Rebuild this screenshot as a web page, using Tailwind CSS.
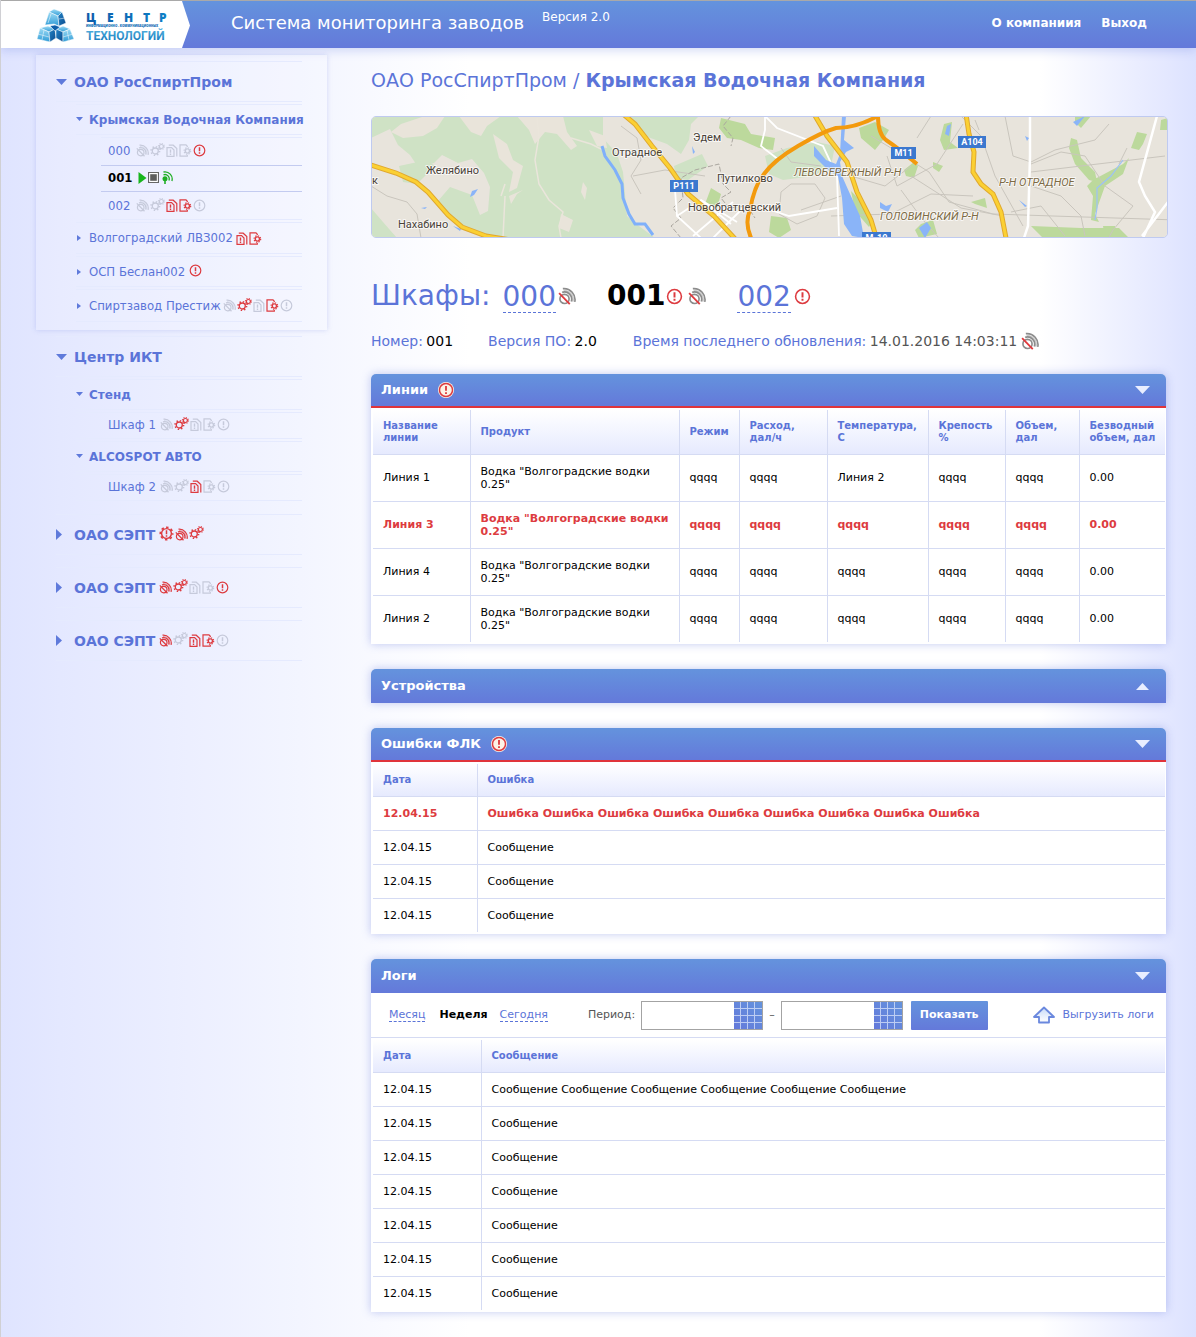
<!DOCTYPE html>
<html lang="ru">
<head>
<meta charset="utf-8">
<meta name="viewport" content="width=device-width, initial-scale=1">
<title>Система мониторинга заводов</title>
<script src="https://cdn.jsdelivr.net/npm/@tailwindcss/browser@4"></script>
</head>
<body class="font-['DejaVu_Sans',Verdana,sans-serif] text-[11px] text-black bg-[linear-gradient(90deg,#dfe4ff_0px,#e4e8ff_60px,#f3f5ff_300px,#ffffff_470px,#ffffff_1040px,#e3e7ff_1170px,#dce2ff_1196px)] border-l border-[#d0d0d4]">

<!-- Icon set -->
<svg class="absolute size-0" aria-hidden="true">
  <defs>
    <linearGradient id="cube-a" x1="0" y1="0" x2="0" y2="1"><stop offset="0" stop-color="#9fdcf5"/><stop offset="1" stop-color="#2f9bd6"/></linearGradient>
    <linearGradient id="cube-b" x1="0" y1="0" x2="1" y2="1"><stop offset="0" stop-color="#2385c8"/><stop offset="1" stop-color="#0b4a8c"/></linearGradient>
    <linearGradient id="word-a" x1="0" y1="0" x2="1" y2="0"><stop offset="0" stop-color="#0d5cab"/><stop offset="1" stop-color="#0d7fc6"/></linearGradient>
    <linearGradient id="word-b" x1="0" y1="0" x2="0" y2="1"><stop offset="0" stop-color="#59b6e2"/><stop offset="1" stop-color="#0e72b8"/></linearGradient>
    <linearGradient id="up-fill" x1="0" y1="0" x2="0" y2="1"><stop offset="0" stop-color="#c9dcf8"/><stop offset="1" stop-color="#ffffff"/></linearGradient>
  </defs>
  <symbol id="i-warn" viewBox="0 0 13 13"><circle cx="6.5" cy="6.5" r="5.3" fill="none" stroke="currentColor" stroke-width="1.2"/><path d="M6.5 3.3v3.9M6.5 8.300v1.500" stroke="currentColor" stroke-width="1.500"/></symbol>
  <symbol id="i-sat" viewBox="0 0 13 13"><g fill="none" stroke="currentColor" stroke-width="1.2"><circle cx="4.7" cy="8.6" r="3.3"/><path d="M3 3.9a5.2 5.2 0 0 1 6.6 6.6M3.500 1.200a8 8 0 0 1 8.600 9.600"/><path d="M4 2.600a6.500 6.500 0 0 1 6.700 8" opacity=".45"/></g><path d="M.8 4.400l7.700 7.900" stroke="var(--slash,currentColor)" stroke-width="1.300"/></symbol>
  <symbol id="i-gears" viewBox="0 0 15 13"><g fill="none" stroke="currentColor"><circle cx="5.3" cy="8" r="3" stroke-width="1.3"/><circle cx="5.3" cy="8" r="4.300" stroke-width="1.500" stroke-dasharray="1.400 1.977"/><circle cx="11.400" cy="3.500" r="2" stroke-width="1.200"/><circle cx="11.400" cy="3.500" r="3" stroke-width="1.100" stroke-dasharray="1.100 1.256"/></g></symbol>
  <symbol id="i-doc" viewBox="0 0 12 13"><g fill="none" stroke="currentColor" stroke-width="1.200"><path d="M1 3.600h4.600L8 6v6.400H1zM2.800 1.200h4.400l3.600 3.400v7.800"/><path d="M4.500 5.500v3.200M4.500 9.600v1.300" stroke-width="1.400"/></g></symbol>
  <symbol id="i-docgear" viewBox="0 0 13 13"><g fill="none" stroke="currentColor"><path d="M8.300 3V2.300L7 .9H1v11.300h7.300V11" stroke-width="1.200"/><circle cx="8.400" cy="7" r="2.100" stroke-width="1.400"/><circle cx="8.400" cy="7" r="3.300" stroke-width="1.200" stroke-dasharray="1.300 1.292"/></g></symbol>
  <symbol id="i-gearwarn" viewBox="0 0 15 15"><g fill="none" stroke="currentColor"><circle cx="7.500" cy="7.500" r="4.900" stroke-width="1.400"/><circle cx="7.500" cy="7.500" r="6.200" stroke-width="1.600" stroke-dasharray="2.500 2.370" stroke-dashoffset="1.200"/><path d="M7.500 4.300v4M7.500 9.300v1.500" stroke-width="1.500"/></g></symbol>
  <symbol id="i-ant" viewBox="0 0 12 13"><circle cx="4" cy="7.800" r="2.500" fill="currentColor"/><path d="M4 8v5" stroke="currentColor" stroke-width="1.600"/><path d="M2.500 3.800a4.300 4.300 0 0 1 5.400 5.700M2.500 1a7.200 7.200 0 0 1 8.400 9" fill="none" stroke="currentColor" stroke-width="1.300"/></symbol>
  <symbol id="i-calendar" viewBox="0 0 28 27"><path d="M6.500 0v27M13.500 0v27M20.500 0v27M0 6.500h28M0 13.500h28M0 20.500h28" stroke="#dbe5fb" stroke-width="1" opacity=".75"/></symbol>
</svg>

<header class="h-12 flex border-t border-[#a9a9a9] -ml-px bg-linear-to-b from-[#6493dd] to-[#6479da] shadow-[0_2px_10px_#6479da4d]">
  <a href="#" aria-label="Центр информационно-коммуникационных технологий" class="block w-[190px] shrink-0">
    <svg class="block w-[190px] h-[47px]" viewBox="0 1 190 47">
      <path d="M0 1h182l8 24.500L182 48H0z" fill="#fff"/>
      <g stroke="#fff" stroke-width=".5" stroke-linejoin="round">
        <path d="M49 12l5-3 8 3-4 4z" fill="url(#cube-a)"/><path d="M49 12l9 4 1 10-5-2-9 1z" fill="url(#cube-a)"/><path d="M58 16l4-4 4 11-7 3z" fill="url(#cube-b)"/><path d="M51 14l-3 9M59 19l6-1" />
        <path d="M40 28l8-2 7 3-6 3z" fill="url(#cube-a)"/><path d="M40 28l9 4 1 10-13-3z" fill="url(#cube-a)"/><path d="M49 32l6-3 1 9-6 4z" fill="url(#cube-b)"/><path d="M44 30l-2 10M38 34l11 3"/>
        <path d="M56 29l7-3 7 3-7 3z" fill="url(#cube-a)"/><path d="M56 29l7 3v10l-7-4z" fill="url(#cube-b)"/><path d="M63 32l7-3 4 10-11 3z" fill="url(#cube-a)"/><path d="M67 30l2 10M63 37l10-3"/>
        <path d="M50 26l5-1 5 2-5 4z" fill="#0e5fa8"/>
      </g>
      <g font-family="'Open Sans',sans-serif" font-weight="800">
        <text x="86 107 124 143 159" y="22" font-size="12" fill="url(#word-a)">ЦЕНТР</text>
        <text x="86" y="27" font-size="3" fill="#0f6db5">ИНФОРМАЦИОННО - КОММУНИКАЦИОННЫХ</text>
      </g>
      <text x="86" y="40" font-family="Roboto,sans-serif" font-weight="700" font-size="12" fill="url(#word-b)">ТЕХНОЛОГИЙ</text>
    </svg>
  </a>
  <div class="flex items-center pl-[41px] gap-[18px] text-white">
    <h1 class="text-[18px] leading-6 -mt-1">Система мониторинга заводов</h1>
    <span class="text-xs self-start pt-2">Версия 2.0</span>
  </div>
  <nav class="ml-auto pr-[49px] pb-1 flex items-center gap-5 text-white text-xs font-bold">
    <a href="#">О компаниия</a><a href="#">Выход</a>
  </nav>
</header>

<div class="flex -ml-px">
<aside class="w-[371px] shrink-0 pl-9 pr-11 pt-[7px]">
  <nav aria-label="Заводы" class="text-[#5b74d8]">
    <section class="bg-white/15 shadow-[0_0_5px_#6479da40] pl-5 pr-[25px] pt-1.5 pb-2">
      <button type="button" class="w-full h-[41px] border-y border-[#e5eafe] flex items-center text-sm font-bold text-left"><svg class="w-[11px] h-1.5 mr-[7px]" viewBox="0 0 11 6"><path d="M0 0h11L5.500 6z" fill="#5f7adb"/></svg>ОАО РосСпиртПром</button>
      <div class="pl-5 flex flex-col gap-0.5 pt-0.5">
        <button type="button" class="h-[31px] border-y border-[#e5eafe] flex items-center text-xs font-bold text-left whitespace-nowrap"><svg class="w-[7px] h-1 mr-1.5 -mt-0.5 shrink-0" viewBox="0 0 7 4"><path d="M0 0h7L3.500 4z" fill="#5f7adb"/></svg>Крымская Водочная Компания</button>
        <ul class="pl-[25px] font-['DejaVu_Sans_Condensed',Tahoma,sans-serif] text-[13px]">
          <li class="h-7 pb-0.5 border-t border-[#e5eafe] pl-[7px] flex items-center gap-px text-[#c6cadb]"><a href="#" class="text-[#5b74d8] mr-[5px]">000</a>
            <svg class="size-[13px]"><use href="#i-sat"/></svg><svg class="w-[15px] h-[13px] -mt-0.5"><use href="#i-gears"/></svg><svg class="w-3 h-[13px]"><use href="#i-doc"/></svg><svg class="size-[13px]"><use href="#i-docgear"/></svg><svg class="size-[13px] text-[#dd3b40]"><use href="#i-warn"/></svg></li>
          <li class="h-[27px] pb-0.5 border-y border-[#c3cbf0] pl-[7px] flex items-center gap-px font-bold"><a href="#" class="text-black mr-[5px]">001</a>
            <svg class="w-[9px] h-3" viewBox="0 0 8 12"><path d="M0 0l8 6-8 6z" fill="#17b51c"/></svg><svg class="size-[11px] mr-px" viewBox="0 0 10 10"><path d="M.5.5h9v9h-9z" fill="#fff" stroke="#666"/><path d="M2 2h6v6H2z" fill="#5d5d5d"/></svg><svg class="w-3 h-[13px] text-[#1fae24]"><use href="#i-ant"/></svg></li>
          <li class="h-7 border-b border-[#e5eafe] pl-[7px] flex items-center gap-px text-[#c6cadb]"><a href="#" class="text-[#5b74d8] mr-[5px]">002</a>
            <svg class="size-[13px]"><use href="#i-sat"/></svg><svg class="w-[15px] h-[13px] -mt-0.5"><use href="#i-gears"/></svg><svg class="w-3 h-[13px] text-[#dd3b40]"><use href="#i-doc"/></svg><svg class="size-[13px] text-[#dd3b40]"><use href="#i-docgear"/></svg><svg class="size-[13px]"><use href="#i-warn"/></svg></li>
        </ul>
        <div class="h-8 border-y border-[#e5eafe] flex items-center gap-px text-[#c6cadb] font-['DejaVu_Sans_Condensed',Tahoma,sans-serif] text-[13px]"><button type="button" class="flex items-center text-[#5b74d8] mr-0.5 pl-px"><svg class="w-1 h-1.5 mr-2" viewBox="0 0 4 6"><path d="M0 0l4 3-4 3z" fill="#5f7adb"/></svg>Волгоградский ЛВЗ002</button>
          <svg class="w-3 h-[13px] text-[#dd3b40]"><use href="#i-doc"/></svg><svg class="size-[13px] text-[#dd3b40]"><use href="#i-docgear"/></svg></div>
        <div class="h-[31px] border-y border-[#e5eafe] flex items-center gap-px text-[#c6cadb] font-['DejaVu_Sans_Condensed',Tahoma,sans-serif] text-[13px]"><button type="button" class="flex items-center text-[#5b74d8] mr-[3px] pl-px"><svg class="w-1 h-1.5 mr-2" viewBox="0 0 4 6"><path d="M0 0l4 3-4 3z" fill="#5f7adb"/></svg>ОСП Беслан002</button>
          <svg class="size-[13px] -mt-0.5 text-[#dd3b40]"><use href="#i-warn"/></svg></div>
        <div class="h-[33px] border-y border-[#e5eafe] flex items-center gap-px text-[#c6cadb] font-['DejaVu_Sans_Condensed',Tahoma,sans-serif] text-[13px]"><button type="button" class="flex items-center text-[#5b74d8] mr-px pl-px"><svg class="w-1 h-1.5 mr-2" viewBox="0 0 4 6"><path d="M0 0l4 3-4 3z" fill="#5f7adb"/></svg>Спиртзавод Престиж</button>
          <svg class="size-[13px]"><use href="#i-sat"/></svg><svg class="w-[15px] h-[13px] -mt-0.5 text-[#dd3b40]"><use href="#i-gears"/></svg><svg class="w-3 h-[13px]"><use href="#i-doc"/></svg><svg class="size-[13px] text-[#dd3b40]"><use href="#i-docgear"/></svg><svg class="size-[13px]"><use href="#i-warn"/></svg></div>
      </div>
    </section>

    <section class="pl-5 pr-[25px] pt-1.5">
      <button type="button" class="w-full h-[41px] border-y border-[#e5eafe] flex items-center text-sm font-bold text-left"><svg class="w-[11px] h-1.5 mr-[7px]" viewBox="0 0 11 6"><path d="M0 0h11L5.500 6z" fill="#5f7adb"/></svg>Центр ИКТ</button>
      <div class="pl-5 flex flex-col gap-0.5 pt-0.5">
        <button type="button" class="h-[31px] border-y border-[#e5eafe] flex items-center text-xs font-bold text-left"><svg class="w-[7px] h-1 mr-1.5 -mt-0.5 shrink-0" viewBox="0 0 7 4"><path d="M0 0h7L3.500 4z" fill="#5f7adb"/></svg>Стенд</button>
        <div class="h-[27px] border-y border-[#e5eafe] pl-8 pb-0.5 flex items-center gap-px text-[#c6cadb] font-['DejaVu_Sans_Condensed',Tahoma,sans-serif] text-[13px]"><a href="#" class="text-[#5b74d8] mr-[3px]">Шкаф 1</a>
          <svg class="size-[13px]"><use href="#i-sat"/></svg><svg class="w-[15px] h-[13px] -mt-0.5 text-[#dd3b40]"><use href="#i-gears"/></svg><svg class="w-3 h-[13px]"><use href="#i-doc"/></svg><svg class="size-[13px]"><use href="#i-docgear"/></svg><svg class="size-[13px]"><use href="#i-warn"/></svg></div>
        <button type="button" class="h-[31px] border-y border-[#e5eafe] flex items-center text-xs font-bold text-left"><svg class="w-[7px] h-1 mr-1.5 -mt-0.5 shrink-0" viewBox="0 0 7 4"><path d="M0 0h7L3.500 4z" fill="#5f7adb"/></svg>ALCOSPOT АВТО</button>
        <div class="h-[27px] border-y border-[#e5eafe] pl-8 pb-0.5 flex items-center gap-px text-[#c6cadb] font-['DejaVu_Sans_Condensed',Tahoma,sans-serif] text-[13px]"><a href="#" class="text-[#5b74d8] mr-[3px]">Шкаф 2</a>
          <svg class="size-[13px]"><use href="#i-sat"/></svg><svg class="w-[15px] h-[13px] -mt-0.5"><use href="#i-gears"/></svg><svg class="w-3 h-[13px] text-[#dd3b40]"><use href="#i-doc"/></svg><svg class="size-[13px]"><use href="#i-docgear"/></svg><svg class="size-[13px]"><use href="#i-warn"/></svg></div>
      </div>
    </section>

    <section class="pl-5 pr-[25px] pt-[13px] flex flex-col gap-3">
      <div class="h-[41px] border-y border-[#e5eafe] flex items-center gap-px text-[#dd3b40]"><button type="button" class="flex items-center text-sm font-bold text-[#5b74d8] mr-[3px]"><svg class="w-1.5 h-[11px] mr-3" viewBox="0 0 6 11"><path d="M0 0l6 5.500L0 11z" fill="#5f7adb"/></svg>ОАО СЭПТ</button>
        <svg class="size-[15px] -mt-0.5"><use href="#i-gearwarn"/></svg><svg class="size-[13px]"><use href="#i-sat"/></svg><svg class="w-[15px] h-[13px] -mt-1"><use href="#i-gears"/></svg></div>
      <div class="h-[41px] border-y border-[#e5eafe] flex items-center gap-px text-[#c6cadb]"><button type="button" class="flex items-center text-sm font-bold text-[#5b74d8] mr-[3px]"><svg class="w-1.5 h-[11px] mr-3" viewBox="0 0 6 11"><path d="M0 0l6 5.500L0 11z" fill="#5f7adb"/></svg>ОАО СЭПТ</button>
        <svg class="size-[13px] text-[#dd3b40]"><use href="#i-sat"/></svg><svg class="w-[15px] h-[13px] -mt-1 text-[#dd3b40]"><use href="#i-gears"/></svg><svg class="w-3 h-[13px]"><use href="#i-doc"/></svg><svg class="size-[13px]"><use href="#i-docgear"/></svg><svg class="size-[13px] text-[#dd3b40]"><use href="#i-warn"/></svg></div>
      <div class="h-[41px] border-y border-[#e5eafe] flex items-center gap-px text-[#c6cadb]"><button type="button" class="flex items-center text-sm font-bold text-[#5b74d8] mr-[3px]"><svg class="w-1.5 h-[11px] mr-3" viewBox="0 0 6 11"><path d="M0 0l6 5.500L0 11z" fill="#5f7adb"/></svg>ОАО СЭПТ</button>
        <svg class="size-[13px] text-[#dd3b40]"><use href="#i-sat"/></svg><svg class="w-[15px] h-[13px] -mt-1"><use href="#i-gears"/></svg><svg class="w-3 h-[13px] text-[#dd3b40]"><use href="#i-doc"/></svg><svg class="size-[13px] text-[#dd3b40]"><use href="#i-docgear"/></svg><svg class="size-[13px]"><use href="#i-warn"/></svg></div>
    </section>
  </nav>
</aside>

<main class="grow min-w-0 pr-[30px] pb-[25px] pt-5">
  <h2 class="text-[19px] leading-6 text-[#5b74d8] whitespace-nowrap"><a href="#">ОАО РосСпиртПром</a> / <b>Крымская Водочная Компания</b></h2>

  <!-- Map of the sites -->
  <div class="mt-6 -mr-0.5 h-[122px] rounded-[5px] border border-[#bfcaf0] overflow-hidden">
    <svg class="block w-full h-full" viewBox="1 1 795 120" preserveAspectRatio="xMidYMid slice" role="img" aria-label="Карта">
      <path d="M0 0h797v122H0z" fill="#e8e4dc"/>
      <path d="M0 0h232l0 22 14 16 6 18 4 44 12 10 16 12H138l-23-4-24-9-14-12-10-12 12-14 22 8 8 20 8-4 2-24-6-14-12-14-14 4-16-8-8 8-16 4-8-12-12-10-8-16L0 22z" fill="#cfe2c5"/>
      <g fill="#cfe2c5">
        <path d="M258 0h70l-8 8-2 16-8 14-14-10-22-8z"/><path d="M303 50l28-12 6 12-20 14-12-2z"/><path d="M394 40l22-8 30-6 18 4-4 20-18 10-30 4-14-6z"/><path d="M0 92l12 14 14 16H0z"/><path d="M28 50l28-6 8 6-18 18-14-2z"/>
      </g>
      <g fill="#e9e4da">
        <path d="M20 16l10-8 24-8h20l-8 12-14 8-20 2zM88 0h42l-14 10-6 10-10-4zM122 18l14 10 6 16 10 6-6 22-8 4 4-20-14-14zM146 0h46l4 16 10 14-6 4-14-16-12-2-10 12-6-14zM212 66l4 6-2 12-4-8zM138 80l14-6-6 4-6 10zM190 98l12 6-4 12-10-4zM218 14l16 6 2 12-10-2z"/>
      </g>
      <path d="M166 2l2 18-4 24 4 24 10 16 14 12-4 14 2 12M200 22l20 6 12 6M130 80l4-12M134 80l-2 42" fill="none" stroke="#eae5db" stroke-width="1.500"/>
      <g fill="#bcd99c">
        <path d="M350 2l24 6 6 10 24 4-2 12-14-2-18-8-14-2-8-10zM340 72l10 6-4 14-12-4zM488 12l16-6 14 8-6 10-8 10-14-12zM480 75l12 12 10 18-4 6-14-16zM573 8l8-2-2 20 8 6-14 2-4-10zM533 54l10-8 4 4-4 12-8-2zM562 46l10 4-4 6-6-4zM600 86l14-4 2 10-12-4zM660 110l50 2 38 0 10 10h-86zM400 100l16 2 4 12-12 8-10-6zM550 108l12-4 4 14-18 4-4-8zM700 22l6 2 4 18 14 14 2 10-8-2-14-16-6-16zM722 64l30-16 6-6-6 16-18 12-10 28 4 8-8-2 2-24-6-10zM760 32l6-16 10 2-4 10-4 6zM790 4l7-2v12h-8zM732 110l12 0 0 12h-10zM704 0h16l-10 12-6-6z"/>
      </g>
      <g fill="none" stroke="#c9c5bd" stroke-width="1">
        <path d="M0 70l16 10 20 6 10 12 4 24M262 60l32-6 40 6M250 10l16 12 4 22-10 16 10 18M410 76l10-8h24l10 14-8 18-20 8-18-10zM500 20l20 12 38 24 20 30 44 12 60 2 124 4M516 40l10 30 40-22 26-40M590 0l20 20 14 40 28 50M634 0l8 40 18 6 24-12 40-10 14-16M660 48l30-12 24 4 20 30 28 20-20 24-10 18M660 56l50-6 84-10M540 60l50 32 42 8M530 74l22 30 16 18M460 100l60-2 40-20 42 2M660 70l30 10 20 20 4 20M756 32l-8 16M450 50l-30-4-10-14M470 80l-40 14M560 0l-14 22M604 4l4 10M640 96l30-6 24 30M480 60l34 10 26-20"/>
      </g>
      <path d="M360 0l-8 10 10 12-2 8M310 122l-10-12 10-8-8-10 10-10-2-20 14-8 24-6 4 20 8 8-10 6 8 10 18-2 8 12" fill="none" stroke="#aaa69f" stroke-width="1" stroke-dasharray="5 2"/>
      <g fill="none" stroke="#fff">
        <path d="M394 0v14l-4 16 18 14M394 0l12 12 46 18 14 30 2 60M394 92l24 8 48-8M304 74l2 26 24 22M306 100l24-16 30 24M330 84l36 22M322 120l40-34M342 122l30-30" stroke-width="1.800"/>
        <path d="M659 0v40l-2 70-4 12M786 0l-18 66 6 14 10 16-12 26M797 86l-26 34" stroke-width="2.500"/>
      </g>
      <g fill="#8ab4f8">
        <path d="M471 0h4l-2 24 10 8-8 4-6 10 2 14 8 18 10 22 4 22-12-2-8-12-2-26-4-22-10-6-14-14 0-10 12 14 10 4 4-10zM509 86l6 4 6-2-4 8-8-4zM548 112l8-6 4 6-6 10zM576 10l4-2-2 12-4-2zM654 20l4 2-2 3zM648 84l8 6-2 1zM702 6l12-6-8 10zM101 75l6-2-4 6-4 2zM321 30l3 6-2 2zM82 110l8 3-1 2zM50 92l6-1-2 2z"/>
      </g>
      <path d="M231 30l3 10 10 14 7 14 1 14 6 16 6 10 10 0 8 11" fill="none" stroke="#7fb0fa" stroke-width="3"/>
      <path d="M752 44l-12 16-14 12 0 20-2 12" fill="none" stroke="#9cc1f8" stroke-width="1.200"/>
      <g fill="none" stroke="#e0a82e" stroke-width="5"><path d="M0 49l25 8 20 9 12 10 20 23 14 12 24 9 25 4M252-2l12 10 17 22 18 22 18 26 26 22 24 26M443-2l13 22 20 26 10 30 14 28 6 20M595-2l3 20 5 18-1 20 8 12 12 10 8 18 5 26"/></g>
      <g fill="none" stroke="#fbd033" stroke-width="3"><path d="M0 49l25 8 20 9 12 10 20 23 14 12 24 9 25 4M252-2l12 10 17 22 18 22 18 26 26 22 24 26M443-2l13 22 20 26 10 30 14 28 6 20M595-2l3 20 5 18-1 20 8 12 12 10 8 18 5 26"/></g>
      <path d="M381 124q-8-16-2-30 4-24 14-36 10-14 34-28 24-14 38-18 20 0 42-12 0 18 8 24 12 8 31 24" fill="none" stroke="#f39a0d" stroke-width="4"/>
      <g font-family="Roboto,sans-serif" font-size="11" fill="#4a4238" stroke="#fff" stroke-opacity=".7" stroke-width="2" stroke-linejoin="round" paint-order="stroke">
        <text x="55" y="58">Желябино</text><text x="27" y="112">Нахабино</text><text x="241" y="40">Отрадное</text><text x="322" y="25">Эдем</text><text x="346" y="66">Путилково</text><text x="317" y="95">Новобратцевский</text><text x="1" y="68">к</text>
        <g font-style="italic" fill="#7d6b45"><text x="423" y="60">ЛЕВОБЕРЕЖНЫЙ Р-Н</text><text x="509" y="104">ГОЛОВИНСКИЙ Р-Н</text><text x="628" y="70">Р-Н ОТРАДНОЕ</text></g>
      </g>
      <path d="M299 64h28v12h-28zM520 31h25v12h-25zM587 20h28v12h-28zM491 116h29v12h-29z" fill="#3b78cf"/>
      <g font-family="Roboto,sans-serif" font-size="9" font-weight="700" fill="#fff" text-anchor="middle"><text x="313" y="73">P111</text><text x="532.500" y="40">M11</text><text x="601" y="29">A104</text><text x="505.500" y="125">M-10</text></g>
    </svg>
  </div>

  <div class="mt-10 flex items-center text-[28px] leading-9 text-[#5b74d8] whitespace-nowrap">
    <h2>Шкафы:</h2>
    <a href="#" class="ml-3 h-[34px] leading-9 border-b border-dashed border-[#5b74d8]">000</a><svg class="ml-0.5 size-[18px] text-[#8c8c8c] [--slash:#e0393c]"><use href="#i-sat"/></svg>
    <b class="ml-[31px] text-black">001</b><svg class="ml-px size-[17px] text-[#dd3b40]"><use href="#i-warn"/></svg><svg class="ml-[5px] size-[18px] text-[#8c8c8c] [--slash:#e0393c]"><use href="#i-sat"/></svg>
    <a href="#" class="ml-[31px] h-[34px] leading-9 border-b border-dashed border-[#5b74d8]">002</a><svg class="ml-[3px] size-[17px] text-[#dd3b40]"><use href="#i-warn"/></svg>
  </div>
  <div class="mt-[15px] flex items-center text-sm leading-6 text-[#5b74d8] whitespace-nowrap">
    <p>Номер: <span class="text-black -ml-px">001</span></p>
    <p class="ml-[35px]">Версия ПО: <span class="text-black -ml-px">2.0</span></p>
    <p class="ml-9">Время последнего обновления: <span class="text-[#555] -ml-px">14.01.2016 14:03:11</span></p>
    <svg class="ml-1 size-[18px] text-[#8c8c8c] [--slash:#e0393c]"><use href="#i-sat"/></svg>
  </div>

  <div class="mt-[21px] flex flex-col gap-[25px]">
    <section class="bg-white rounded-t-[5px] shadow-[0_0_10px_#6479da66]">
      <header class="h-[34px] rounded-t-[5px] border-b-2 border-[#e0343b] bg-linear-to-b from-[#6493dd] to-[#6479da] flex items-center px-2.5 text-white">
        <h3 class="text-[13px] font-bold">Линии</h3><svg class="ml-2.5 size-4 rounded-full bg-[#fdf3e6] text-[#dd3b40]"><use href="#i-warn"/></svg>
        <button type="button" aria-label="Свернуть" class="ml-auto mr-1.5"><svg class="block w-[15px] h-2" viewBox="0 0 15 8"><path d="M0 0h15L7.500 8z" fill="#e9eeff"/></svg></button>
      </header>
      <div class="py-0.5 pl-0.5 pr-px">
      <table class="w-full table-fixed leading-[13px]">
        <colgroup><col class="w-[97px]"><col><col class="w-[60px]"><col class="w-[88px]"><col class="w-[101px]"><col class="w-[77px]"><col class="w-[74px]"><col class="w-[86px]"></colgroup>
        <thead class="text-[10px] leading-3 text-[#5b74d8] text-left bg-linear-to-b from-white to-[#e6eafe]">
          <tr class="h-11 border-b border-[#d5dbf3] divide-x divide-[#d5dbf3]"><th class="px-2.5">Название линии</th><th class="px-2.5">Продукт</th><th class="pl-2.5">Режим</th><th class="px-2.5">Расход, дал/ч</th><th class="pl-2.5">Температура, С</th><th class="pl-2.5">Крепость %</th><th class="px-2.5">Объем, дал</th><th class="pl-2.5">Безводный объем, дал</th></tr>
        </thead>
        <tbody class="divide-y divide-[#d5dbf3]">
          <tr class="h-[47px] divide-x divide-[#d5dbf3]"><td class="px-2.5">Линия 1</td><td class="pl-2.5 pr-2">Водка "Волгоградские водки 0.25"</td><td class="px-2.5">qqqq</td><td class="px-2.5">qqqq</td><td class="px-2.5">Линия 2</td><td class="px-2.5">qqqq</td><td class="px-2.5">qqqq</td><td class="px-2.5">0.00</td></tr>
          <tr class="h-[47px] divide-x divide-[#d5dbf3] font-bold text-[#dd3b40]"><td class="px-2.5">Линия 3</td><td class="pl-2.5 pr-2">Водка "Волгоградские водки 0.25"</td><td class="px-2.5">qqqq</td><td class="px-2.5">qqqq</td><td class="px-2.5">qqqq</td><td class="px-2.5">qqqq</td><td class="px-2.5">qqqq</td><td class="px-2.5">0.00</td></tr>
          <tr class="h-[47px] divide-x divide-[#d5dbf3]"><td class="px-2.5">Линия 4</td><td class="pl-2.5 pr-2">Водка "Волгоградские водки 0.25"</td><td class="px-2.5">qqqq</td><td class="px-2.5">qqqq</td><td class="px-2.5">qqqq</td><td class="px-2.5">qqqq</td><td class="px-2.5">qqqq</td><td class="px-2.5">0.00</td></tr>
          <tr class="h-[47px] divide-x divide-[#d5dbf3]"><td class="px-2.5">Линия 2</td><td class="pl-2.5 pr-2">Водка "Волгоградские водки 0.25"</td><td class="px-2.5">qqqq</td><td class="px-2.5">qqqq</td><td class="px-2.5">qqqq</td><td class="px-2.5">qqqq</td><td class="px-2.5">qqqq</td><td class="px-2.5">0.00</td></tr>
        </tbody>
      </table>
      </div>
    </section>

    <section class="rounded-t-[5px] shadow-[0_0_10px_#6479da66]">
      <header class="h-[34px] rounded-t-[5px] bg-linear-to-b from-[#6493dd] to-[#6479da] flex items-center px-2.5 text-white">
        <h3 class="text-[13px] font-bold">Устройства</h3>
        <button type="button" aria-label="Развернуть" class="ml-auto mr-[7px]"><svg class="block w-[13px] h-[7px]" viewBox="0 0 13 7"><path d="M0 7h13L6.500 0z" fill="#e9eeff"/></svg></button>
      </header>
    </section>

    <section class="bg-white rounded-t-[5px] shadow-[0_0_10px_#6479da66]">
      <header class="h-[34px] rounded-t-[5px] border-b-2 border-[#e0343b] bg-linear-to-b from-[#6493dd] to-[#6479da] flex items-center px-2.5 text-white">
        <h3 class="text-[13px] font-bold">Ошибки ФЛК</h3><svg class="ml-2.5 size-4 rounded-full bg-[#fdf3e6] text-[#dd3b40]"><use href="#i-warn"/></svg>
        <button type="button" aria-label="Свернуть" class="ml-auto mr-1.5"><svg class="block w-[15px] h-2" viewBox="0 0 15 8"><path d="M0 0h15L7.500 8z" fill="#e9eeff"/></svg></button>
      </header>
      <div class="py-0.5 pl-0.5 pr-px">
      <table class="w-full table-fixed leading-[13px]">
        <colgroup><col class="w-[104px]"><col></colgroup>
        <thead class="text-[10px] leading-3 text-[#5b74d8] text-left bg-linear-to-b from-white to-[#e6eafe]"><tr class="h-8 border-b border-[#d5dbf3] divide-x divide-[#d5dbf3]"><th class="px-2.5">Дата</th><th class="px-2.5">Ошибка</th></tr></thead>
        <tbody class="divide-y divide-[#d5dbf3]">
          <tr class="h-[34px] divide-x divide-[#d5dbf3] font-bold text-[#dd3b40]"><td class="px-2.5">12.04.15</td><td class="px-2.5">Ошибка Ошибка Ошибка Ошибка Ошибка Ошибка Ошибка Ошибка Ошибка</td></tr>
          <tr class="h-[34px] divide-x divide-[#d5dbf3]"><td class="px-2.5">12.04.15</td><td class="px-2.5">Сообщение</td></tr>
          <tr class="h-[34px] divide-x divide-[#d5dbf3]"><td class="px-2.5">12.04.15</td><td class="px-2.5">Сообщение</td></tr>
          <tr class="h-[34px] divide-x divide-[#d5dbf3]"><td class="px-2.5">12.04.15</td><td class="px-2.5">Сообщение</td></tr>
        </tbody>
      </table>
      </div>
    </section>

    <section class="bg-white rounded-t-[5px] shadow-[0_0_10px_#6479da66]">
      <header class="h-[34px] rounded-t-[5px] bg-linear-to-b from-[#6493dd] to-[#6479da] flex items-center px-2.5 text-white">
        <h3 class="text-[13px] font-bold">Логи</h3>
        <button type="button" aria-label="Свернуть" class="ml-auto mr-1.5"><svg class="block w-[15px] h-2" viewBox="0 0 15 8"><path d="M0 0h15L7.500 8z" fill="#e9eeff"/></svg></button>
      </header>
      <form class="h-[45px] border-b border-[#d5dbf3] flex items-center pl-[18px] pr-3 text-[#5b74d8]">
        <a href="#" class="leading-3 border-b border-dashed border-[#5b74d8]">Месяц</a>
        <b class="ml-3.5 text-black">Неделя</b>
        <a href="#" class="ml-3 leading-3 border-b border-dashed border-[#5b74d8]">Сегодня</a>
        <label for="from" class="ml-10 text-[#555]">Период:</label>
        <span class="ml-1.5 w-[122px] h-[29px] flex border border-[#a3a3a3] bg-white"><input id="from" type="text" class="min-w-0 grow px-2 text-black outline-none"><button type="button" aria-label="Календарь" class="w-7 shrink-0 bg-linear-to-tr from-[#6479da] to-[#6493dd]"><svg class="block w-7 h-[27px]"><use href="#i-calendar"/></svg></button></span>
        <label for="to" class="mx-1.5 text-[#555]">–</label>
        <span class="w-[122px] h-[29px] flex border border-[#a3a3a3] bg-white"><input id="to" type="text" class="min-w-0 grow px-2 text-black outline-none"><button type="button" aria-label="Календарь" class="w-7 shrink-0 bg-linear-to-tr from-[#6479da] to-[#6493dd]"><svg class="block w-7 h-[27px]"><use href="#i-calendar"/></svg></button></span>
        <button type="submit" class="ml-2 w-[77px] h-[29px] rounded-[1px] bg-linear-to-b from-[#6493dd] to-[#6479da] text-white font-bold">Показать</button>
        <a href="#" class="ml-auto flex items-center gap-1.5"><svg class="w-6 h-[18px]" viewBox="0 0 24 18"><path d="M12 1.500L2 11h5v5.500h10V11h5z" fill="url(#up-fill)" stroke="#6a88de" stroke-width="1.800" stroke-linejoin="round"/></svg>Выгрузить логи</a>
      </form>
      <div class="py-0.5 pl-0.5 pr-px">
      <table class="w-full table-fixed leading-[13px]">
        <colgroup><col class="w-[108px]"><col></colgroup>
        <thead class="text-[10px] leading-3 text-[#5b74d8] text-left bg-linear-to-b from-white to-[#e6eafe]"><tr class="h-8 border-b border-[#d5dbf3] divide-x divide-[#d5dbf3]"><th class="px-2.5">Дата</th><th class="px-2.5">Сообщение</th></tr></thead>
        <tbody class="divide-y divide-[#d5dbf3]">
          <tr class="h-[34px] divide-x divide-[#d5dbf3]"><td class="px-2.5">12.04.15</td><td class="px-2.5">Сообщение Сообщение Сообщение Сообщение Сообщение Сообщение</td></tr>
          <tr class="h-[34px] divide-x divide-[#d5dbf3]"><td class="px-2.5">12.04.15</td><td class="px-2.5">Сообщение</td></tr>
          <tr class="h-[34px] divide-x divide-[#d5dbf3]"><td class="px-2.5">12.04.15</td><td class="px-2.5">Сообщение</td></tr>
          <tr class="h-[34px] divide-x divide-[#d5dbf3]"><td class="px-2.5">12.04.15</td><td class="px-2.5">Сообщение</td></tr>
          <tr class="h-[34px] divide-x divide-[#d5dbf3]"><td class="px-2.5">12.04.15</td><td class="px-2.5">Сообщение</td></tr>
          <tr class="h-[34px] divide-x divide-[#d5dbf3]"><td class="px-2.5">12.04.15</td><td class="px-2.5">Сообщение</td></tr>
          <tr class="h-[34px] divide-x divide-[#d5dbf3]"><td class="px-2.5">12.04.15</td><td class="px-2.5">Сообщение</td></tr>
        </tbody>
      </table>
      </div>
    </section>
  </div>
</main>
</div>
</body>
</html>
